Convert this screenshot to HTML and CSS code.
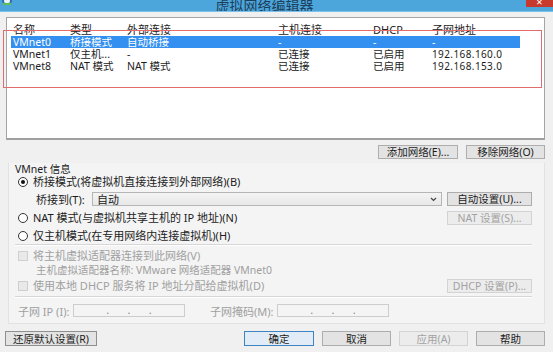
FILE: index.html
```html
<!DOCTYPE html>
<html lang="zh-CN">
<head>
<meta charset="utf-8">
<title>虚拟网络编辑器</title>
<link rel="stylesheet" href="styles.css">
</head>
<body>
<div class="window">
  <div class="titlebar">
    <svg class="app-icon" width="12" height="8" viewBox="0 0 12 8"><ellipse cx="6" cy="1" rx="5" ry="4" fill="#2f6fb0"/><ellipse cx="6" cy="1" rx="3" ry="2.2" fill="#e8f4ff"/><rect x="2" y="3" width="8" height="2" fill="#5fbf4a"/></svg>
    <span class="title">虚拟网络编辑器</span>
    <span class="close">×</span>
  </div>
  <div class="client">
    <div class="list">
      <div class="list-head">
        <span class="c1">名称</span><span class="c2">类型</span><span class="c3">外部连接</span><span class="c4">主机连接</span><span class="c5">DHCP</span><span class="c6">子网地址</span>
      </div>
      <div class="row selected">
        <span class="c1">VMnet0</span><span class="c2">桥接模式</span><span class="c3">自动桥接</span><span class="c4">-</span><span class="c5">-</span><span class="c6">-</span>
      </div>
      <div class="row">
        <span class="c1">VMnet1</span><span class="c2">仅主机...</span><span class="c3">-</span><span class="c4">已连接</span><span class="c5">已启用</span><span class="c6 ip">192.168.160.0</span>
      </div>
      <div class="row">
        <span class="c1">VMnet8</span><span class="c2">NAT 模式</span><span class="c3">NAT 模式</span><span class="c4">已连接</span><span class="c5">已启用</span><span class="c6 ip">192.168.153.0</span>
      </div>
    </div>
    <div class="list-actions">
      <span class="btn btn-add">添加网络(E)...</span>
      <span class="btn btn-remove">移除网络(O)</span>
    </div>
    <div class="group">
      <div class="group-label">VMnet 信息</div>
      <div class="opt opt-first"><span class="radio checked"></span><span>桥接模式(将虚拟机直接连接到外部网络)(B)</span></div>
      <div class="line line-bridge">
        <span class="bridge-label">桥接到(T):</span>
        <span class="select"><span>自动</span><svg class="chev" width="7" height="5" viewBox="0 0 7 5"><path d="M1 1 L3.5 3.5 L6 1" fill="none" stroke="#444" stroke-width="1.2"/></svg></span>
        <span class="btn side-btn">自动设置(U)...</span>
      </div>
      <div class="line line-nat">
        <span class="opt"><span class="radio"></span><span>NAT 模式(与虚拟机共享主机的 IP 地址)(N)</span></span>
        <span class="btn side-btn disabled">NAT 设置(S)...</span>
      </div>
      <div class="opt opt-host"><span class="radio"></span><span>仅主机模式(在专用网络内连接虚拟机)(H)</span></div>
      <div class="sep sep-1"></div>
      <div class="opt opt-check1 disabled"><span class="check"></span><span>将主机虚拟适配器连接到此网络(V)</span></div>
      <div class="adapter disabled">主机虚拟适配器名称: VMware 网络适配器 VMnet0</div>
      <div class="line line-dhcp">
        <span class="opt disabled"><span class="check"></span><span>使用本地 DHCP 服务将 IP 地址分配给虚拟机(D)</span></span>
        <span class="btn side-btn disabled">DHCP 设置(P)...</span>
      </div>
      <div class="sep sep-2"></div>
      <div class="subnet disabled">
        <span class="sub-label">子网 IP (I):</span>
        <span class="ipfield"><i>.</i><i>.</i><i>.</i></span>
        <span class="sub-label mask-label">子网掩码(M):</span>
        <span class="ipfield"><i>.</i><i>.</i><i>.</i></span>
      </div>
    </div>
    <div class="footer">
      <span class="btn btn-restore">还原默认设置(R)</span>
      <span class="spacer"></span>
      <span class="btn btn-foot btn-ok">确定</span>
      <span class="btn btn-foot">取消</span>
      <span class="btn btn-foot disabled">应用(A)</span>
      <span class="btn btn-foot">帮助</span>
    </div>
  </div>
  <div class="annotation"></div>
</div>
</body>
</html>
```

FILE: styles.css
```css
* { box-sizing: border-box; }
html, body { margin: 0; padding: 0; }
body {
  width: 553px;
  height: 352px;
  overflow: hidden;
  background: #f0f0f0;
  font-family: "Noto Sans", "Noto Sans CJK SC", sans-serif;
  font-size: 11px;
  color: #1c1c1c;
}
.window {
  position: relative;
  width: 553px;
  height: 352px;
  background: #f0f0f0;
}
.titlebar {
  height: 12px;
  background: #4ca6dc;
  display: flex;
  align-items: flex-end;
  overflow: hidden;
  border-bottom: 1px solid #7ec0e8;
}
.app-icon { align-self: flex-start; margin-left: 1px; }
.title {
  flex: 1;
  text-align: center;
  font-size: 14px;
  line-height: 14px;
  color: #1e3f5a;
  margin-bottom: -2px;
  padding-right: 10px;
}
.close {
  align-self: flex-start;
  width: 27px;
  height: 7px;
  background: #c7382d;
  color: #fff;
  font-size: 11px;
  line-height: 4px;
  text-align: center;
  overflow: hidden;
}
.client {
  padding: 5px 8px 0 6px;
}
.list {
  height: 123px;
  background: #fff;
  border: 1px solid #a5a5a5;
  border-bottom: 2px solid #a0a0a0;
  padding: 6px 0 0 4px;
}
.list-head, .row {
  display: flex;
  width: 509px;
  white-space: nowrap;
}
.list-head { height: 12px; line-height: 12px; color: #222; }
.row { height: 12px; line-height: 12px; font-size: 10.5px; }
.row.selected { background: #3390f0; color: #fff; }
.list span { padding-left: 2px; }
.c1 { width: 57px; }
.c2 { width: 57px; }
.c3 { width: 151px; }
.c4 { width: 95px; }
.c5 { width: 59px; }
.c6 { flex: 1; }
.row .ip { font-size: 10px; letter-spacing: 0.4px; }
.btn {
  display: inline-flex;
  align-items: center;
  justify-content: center;
  height: 14px;
  background: #e3e3e3;
  border: 1px solid #adadad;
  font-size: 10.5px;
  line-height: 12px;
  white-space: nowrap;
}
.btn.disabled { color: #a2a2a2; border-color: #d3d3d3; background: #ececec; }
.list-actions {
  display: flex;
  justify-content: flex-end;
  gap: 8px;
  margin-top: 5px;
}
.btn-add { width: 80px; }
.btn-remove { width: 79px; }
.group {
  margin: 4px 0 0 2px;
  height: 161px;
  background: #f4f4f4;
  border: 1px solid #e2e2e2;
  border-top: none;
  padding: 0 12px 0 6px;
}
.group-label { height: 12px; line-height: 12px; font-size: 10.5px; }
.opt {
  display: flex;
  align-items: center;
  gap: 5px;
  height: 12px;
  line-height: 12px;
  padding-left: 3px;
  white-space: nowrap;
}
.opt-first { margin-top: 1px; }
.radio {
  width: 10px;
  height: 10px;
  border-radius: 50%;
  border: 1px solid #333;
  background: #fff;
  flex: none;
  position: relative;
}
.radio.checked::after {
  content: "";
  position: absolute;
  left: 2px;
  top: 2px;
  width: 4px;
  height: 4px;
  border-radius: 50%;
  background: #111;
}
.check {
  width: 10px;
  height: 10px;
  border: 1px solid #cfcfcf;
  background: #e9e9e9;
  flex: none;
}
.line { display: flex; align-items: center; height: 14px; }
.line-bridge { margin-top: 4px; gap: 5px; }
.bridge-label { width: 51px; margin-left: 21px; white-space: nowrap; }
.select {
  flex: 1;
  height: 14px;
  border: 1px solid #b5b5b5;
  background: linear-gradient(#f4f4f4, #e8e8e8);
  display: flex;
  align-items: center;
  justify-content: space-between;
  padding: 0 4px 0 4px;
}
.side-btn { width: 85px; flex: none; }
.line-nat { margin-top: 5px; justify-content: space-between; }
.opt-host { margin-top: 5px; }
.sep { background: #d6d6d6; border-bottom: 1px solid #fff; height: 2px; }
.sep-1 { margin-top: 2px; }
.opt-check1 { margin-top: 4px; }
.disabled { color: #a0a0a0; }
.adapter { margin-top: 2px; height: 12px; line-height: 12px; padding-left: 21px; white-space: nowrap; font-size: 10.5px; }
.line-dhcp { margin-top: 3px; justify-content: space-between; }
.sep-2 { margin-top: 3px; }
.subnet { display: flex; align-items: center; margin-top: 6px; height: 13px; white-space: nowrap; }
.sub-label { width: 58px; padding-left: 3px; }
.mask-label { width: 70px; margin-left: 22px; padding-left: 3px; }
.ipfield {
  width: 112px;
  height: 13px;
  border: 1px solid #cdcdcd;
  background: #f4f4f4;
  display: flex;
  justify-content: space-evenly;
  padding: 0 14px 0 14px;
  line-height: 9px;
}
.ipfield i { font-style: normal; color: #888; }
.footer {
  display: flex;
  gap: 8px;
  margin-top: 7px;
  margin-left: -1px;
}
.btn-restore { width: 92px; height: 15px; border-color: #8f8f8f; }
.spacer { flex: 1; }
.btn-foot { width: 69px; height: 15px; }
.btn-ok { width: 70px; border-color: #3f84c2; background: #e1ecf7; }
.annotation {
  position: absolute;
  left: 3px;
  top: 30px;
  width: 539px;
  height: 58px;
  border: 1px solid #e26b6b;
  pointer-events: none;
}
```
